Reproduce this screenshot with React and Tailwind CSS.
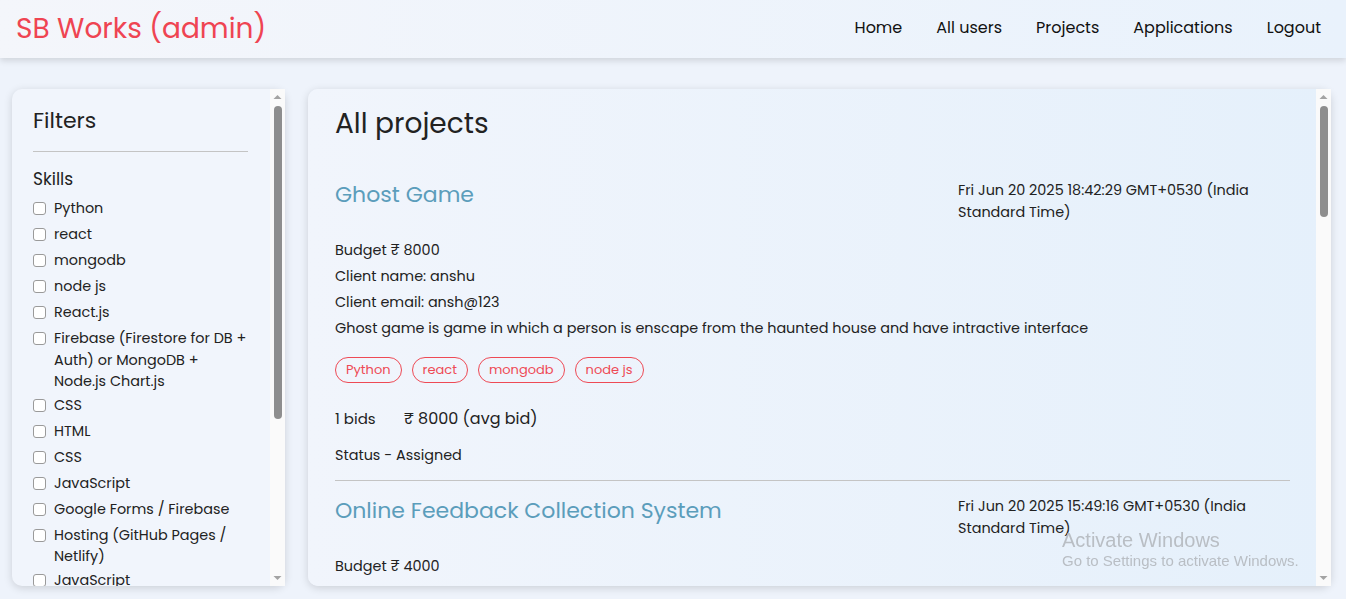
import React from "react";

const skills = [
  "Python",
  "react",
  "mongodb",
  "node js",
  "React.js",
  "Firebase (Firestore for DB + Auth) or MongoDB + Node.js Chart.js",
  "CSS",
  "HTML",
  "CSS",
  "JavaScript",
  "Google Forms / Firebase",
  "Hosting (GitHub Pages / Netlify)",
  "JavaScript",
  "Node.js",
  "Express",
  "MySQL",
  "Tailwind",
  "Bootstrap",
  "Java",
];

const projects = [
  {
    title: "Ghost Game",
    date: "Fri Jun 20 2025 18:42:29 GMT+0530 (India Standard Time)",
    budget: "8000",
    client: "anshu",
    email: "ansh@123",
    description:
      "Ghost game is game in which a person is enscape from the haunted house and have intractive interface",
    skills: ["Python", "react", "mongodb", "node js"],
    bids: 1,
    avg: "8000",
    status: "Assigned",
  },
  {
    title: "Online Feedback Collection System",
    date: "Fri Jun 20 2025 15:49:16 GMT+0530 (India Standard Time)",
    budget: "4000",
    client: "rahul",
    email: "rahul@gmail.com",
    description:
      "A simple system to collect feedback from users with charts and an admin dashboard",
    skills: ["React.js", "Firebase (Firestore for DB + Auth) or MongoDB + Node.js Chart.js"],
    bids: 1,
    avg: "4000",
    status: "Assigned",
  },
];

// static scrollbar look (headless page hides the real one)
const Scrollbar = ({ thumb }) => (
  <div className="w-[15px] shrink-0 bg-[#fafafa] flex flex-col items-center">
    <svg width="15" height="15" viewBox="0 0 15 15" className="shrink-0">
      <path d="M3.5 10 L7.5 6 L11.5 10 Z" fill="#a3a3a3" />
    </svg>
    <div className={`mt-[2px] w-[8px] rounded-full bg-[#8e8e8e] ${thumb}`} />
    <div className="flex-1" />
    <svg width="15" height="15" viewBox="0 0 15 15" className="shrink-0">
      <path d="M3.5 5 L7.5 9 L11.5 5 Z" fill="#a3a3a3" />
    </svg>
  </div>
);

const Navbar = () => (
  <nav className="h-[58px] flex items-center justify-between pl-4 pr-[25px] bg-gradient-to-r from-[#f4f6fb] to-[#e9f2fc] shadow-[0_3px_6px_rgba(0,0,0,0.12)] relative z-10">
    <h1 className="text-[28px] text-[#ef4452] leading-none">SB Works (admin)</h1>
    <ul className="flex gap-[34px] text-[16px] text-[#111] -mt-[2px]">
      <li>Home</li>
      <li>All users</li>
      <li>Projects</li>
      <li>Applications</li>
      <li>Logout</li>
    </ul>
  </nav>
);

const Filters = () => (
  <aside className="w-[273px] h-[497px] shrink-0 flex rounded-[10px] bg-[#f1f5fc] shadow-[0_2px_8px_rgba(0,0,0,0.15)]">
    <div className="flex-1 overflow-hidden rounded-l-[10px]">
      <div className="pl-[21px] pr-[22px] pt-[17px] pb-4">
        <h3 className="text-[22px] text-[#222] leading-[30px]">Filters</h3>
        <hr className="mt-[15px] border-t border-[#c4c4c4]" />
        <h5 className="mt-[15px] text-[17px] text-[#222] leading-6">Skills</h5>
        <div className="mt-[7px] flex flex-col">
          {skills.map((s, i) => (
            <label key={i} className="min-h-[24px] mb-[2px] flex items-start gap-2 text-[14.4px] leading-[21.6px] text-[#222]">
              <span className="mt-[4px] w-[13px] h-[13px] shrink-0 rounded-[3px] border border-[#9a9a9a] bg-white" />
              <span>{s}</span>
            </label>
          ))}
        </div>
      </div>
    </div>
    <Scrollbar thumb="h-[313px]" />
  </aside>
);

const Project = ({ p, last }) => (
  <div className={last ? "pb-4" : "border-b border-[#c4c4c4] pb-[14px] mb-[9px]"}>
    <div className="flex justify-between">
      <h3 className="mt-[5px] text-[22px] leading-[32px] text-[#5b9dbb]">{p.title}</h3>
      <p className="mt-[5px] w-[332px] text-[14.4px] leading-[22px] text-[#222]">{p.date}</p>
    </div>
    <div className="mt-[16px] flex flex-col gap-1 text-[14.4px] leading-[22px] text-[#222]">
      <p>Budget ₹ {p.budget}</p>
      <p>Client name: {p.client}</p>
      <p>Client email: {p.email}</p>
      <p>{p.description}</p>
    </div>
    <div className="mt-[18px] flex flex-wrap gap-[10px]">
      {p.skills.map((s) => (
        <span key={s} className="h-[26px] px-[10px] flex items-center rounded-full border border-[#ee4a55] text-[13px] text-[#ee4a55]">
          {s}
        </span>
      ))}
    </div>
    <div className="mt-[24px] flex items-center gap-[28px] text-[#222]">
      <span className="text-[15px]">{p.bids} bids</span>
      <span className="text-[16px]">₹ {p.avg} (avg bid)</span>
    </div>
    <p className="mt-[13px] text-[14.4px] leading-[22px] text-[#222]">Status - {p.status}</p>
  </div>
);

const App = () => {
  return (
    <div className="min-h-[599px] bg-[#eef3fb] font-['Poppins','Inter',sans-serif]">
      <Navbar />
      <main className="flex gap-[23px] pl-3 pr-[15px] pt-[31px]">
        <Filters />
        <section className="flex-1 h-[497px] flex rounded-[10px] bg-gradient-to-r from-[#f1f5fc] to-[#e5f0fb] shadow-[0_2px_8px_rgba(0,0,0,0.15)]">
          <div className="flex-1 overflow-hidden rounded-l-[10px] pl-[27px] pr-[26px] pt-[17px]">
            <h3 className="text-[28px] leading-[36px] text-[#222]">All projects</h3>
            <div className="mt-[32px]">
              {projects.map((p, i) => (
                <Project key={i} p={p} last={i === projects.length - 1} />
              ))}
            </div>
          </div>
          <Scrollbar thumb="h-[111px]" />
        </section>
      </main>
      <div className="fixed left-[1062px] top-[528px] pointer-events-none font-['Liberation_Sans',sans-serif] text-[#b9bec4]">
        <p className="text-[20px] leading-[24px]">Activate Windows</p>
        <p className="text-[15px] leading-[20px] -mt-[1px]">Go to Settings to activate Windows.</p>
      </div>
    </div>
  );
};

export default App;
